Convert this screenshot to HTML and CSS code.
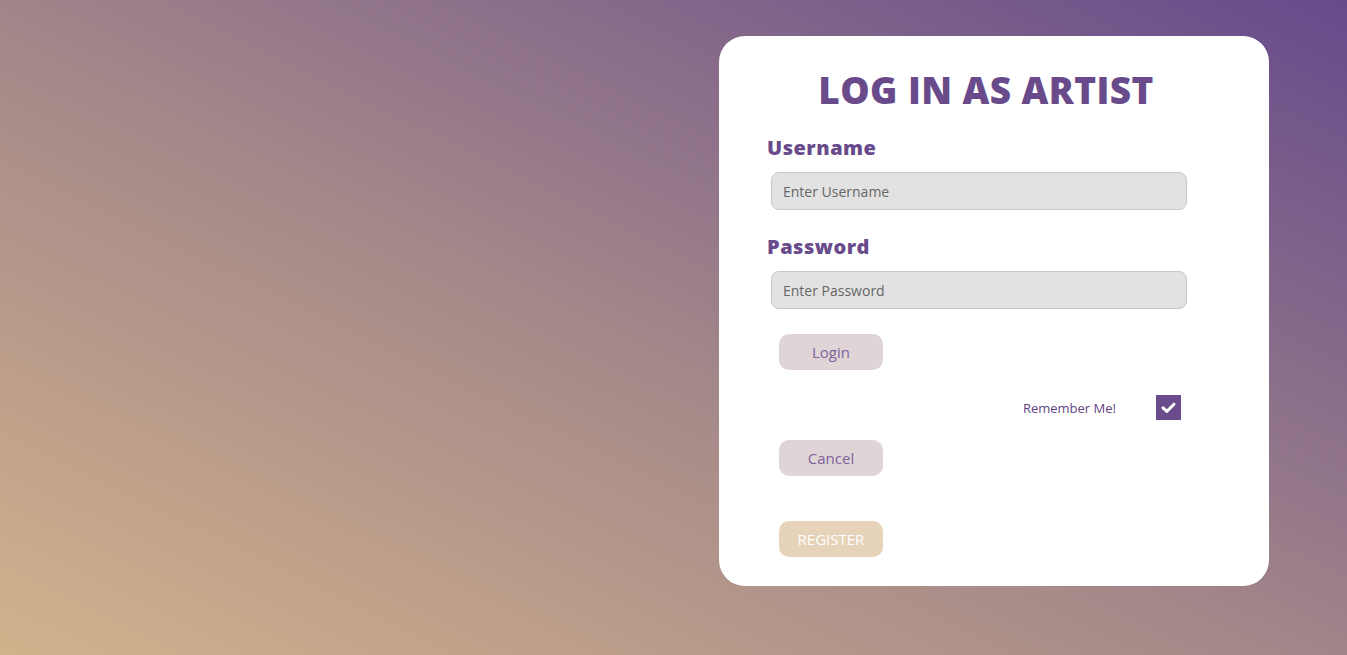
FILE: index.html
```html
<!DOCTYPE html>
<html>
<head>
<meta charset="utf-8">
<link rel="stylesheet" href="styles.css">
</head>
<body>
<div class="page">
  <div class="card">
    <h1 class="title">LOG IN AS ARTIST</h1>
    <label class="label">Username</label>
    <input class="field" type="text" placeholder="Enter Username">
    <label class="label label-pw">Password</label>
    <input class="field" type="password" placeholder="Enter Password">
    <button class="btn btn-login">Login</button>
    <div class="remember">
      <span class="remember-text">Remember Me!</span>
      <span class="check">
        <svg width="25" height="25" viewBox="0 0 25 25"><path d="M7 12.8 L10.8 16.4 L18 9.2" fill="none" stroke="#fff" stroke-width="3" stroke-linecap="round" stroke-linejoin="round"/></svg>
      </span>
    </div>
    <button class="btn btn-cancel">Cancel</button>
    <button class="btn btn-register">REGISTER</button>
  </div>
</div>
</body>
</html>
```

FILE: styles.css
```css
html, body {
  margin: 0;
  padding: 0;
  height: 100%;
}
body {
  background: linear-gradient(to top right, #d2b28c 0%, #a68a89 45%, #674a8b 100%);
  font-family: "Open Sans", "DejaVu Sans", sans-serif;
}
.page {
  display: flex;
  justify-content: flex-end;
  padding: 36px 78px 0 0;
}
.card {
  width: 550px;
  height: 550px;
  box-sizing: border-box;
  background: #fff;
  border-radius: 26px;
  padding: 30px 48px 0 48px;
  display: flex;
  flex-direction: column;
  align-items: flex-start;
}
.title {
  align-self: stretch;
  margin: 0 16px 0 0;
  text-align: center;
  color: #694b8b;
  font-size: 37px;
  font-weight: 800;
  letter-spacing: 0.4px;
  line-height: 48px;
}
.label {
  margin-top: 20px;
  color: #694b8b;
  font-size: 20px;
  font-weight: 800;
  letter-spacing: 0.5px;
  line-height: 28px;
}
.label-pw {
  margin-top: 23px;
}
.field {
  margin: 10px 0 0 4px;
  width: 416px;
  height: 38px;
  box-sizing: border-box;
  border: 1px solid #c8c8c8;
  border-radius: 8px;
  background: #e2e2e2;
  padding: 0 11px;
  font-family: "Open Sans", "DejaVu Sans", sans-serif;
  font-size: 14px;
  color: #555;
  outline: none;
}
.field::placeholder {
  color: #666;
}
.btn {
  width: 104px;
  height: 36px;
  margin-left: 12px;
  border: none;
  border-radius: 10px;
  font-family: "Open Sans", "DejaVu Sans", sans-serif;
  font-size: 15px;
}
.btn-login {
  margin-top: 25px;
  background: #dfd5d6;
  color: #7d629c;
}
.remember {
  align-self: stretch;
  display: flex;
  justify-content: flex-end;
  align-items: center;
  gap: 40px;
  margin: 25px 40px 0 0;
}
.remember-text {
  font-size: 13px;
  color: #5f4582;
}
.check {
  display: block;
  width: 25px;
  height: 25px;
  background: #6a4c8c;
}
.check svg {
  display: block;
}
.btn-cancel {
  margin-top: 20px;
  background: #dfd5d6;
  color: #7d629c;
}
.btn-register {
  margin-top: 45px;
  background: #e6d3b9;
  color: #fff;
}
```
